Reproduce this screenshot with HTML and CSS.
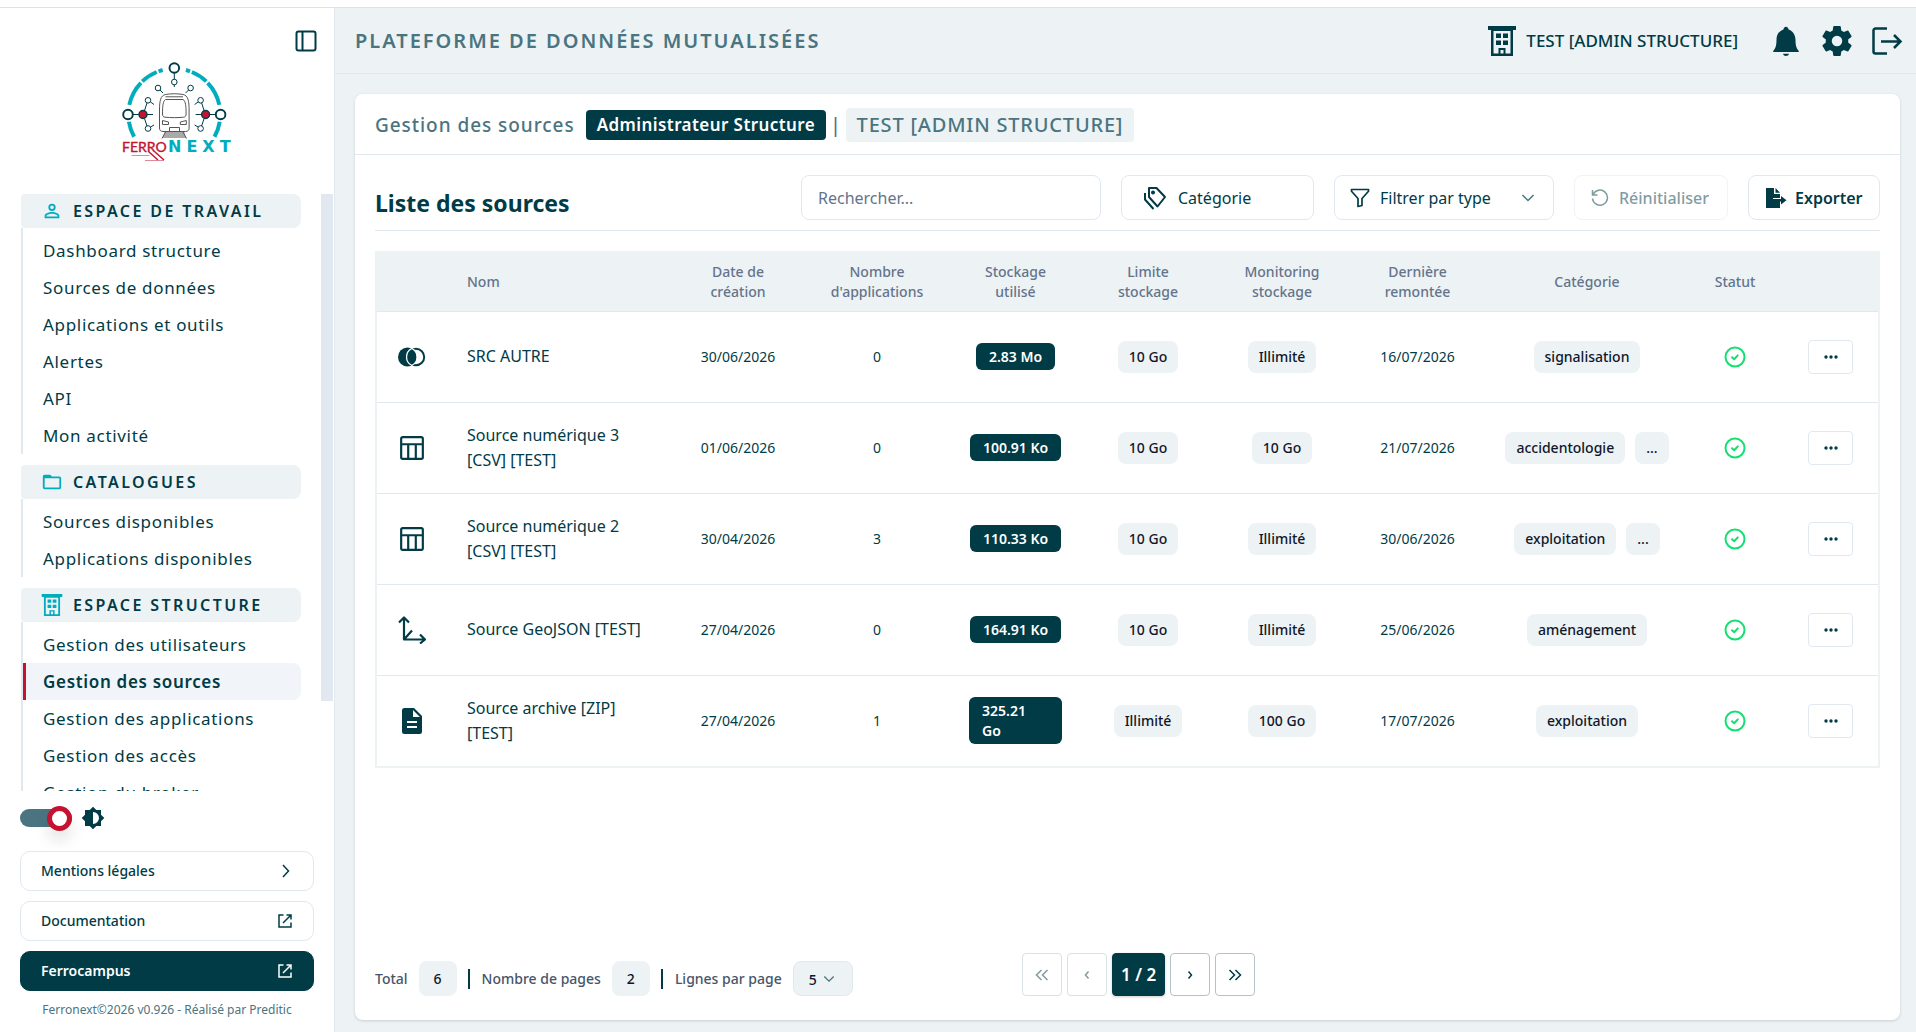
FILE: index.html
```html
<!DOCTYPE html>
<html lang="fr">
<head>
<meta charset="utf-8">
<meta name="viewport" content="width=device-width, initial-scale=1">
<title>Gestion des sources</title>
<link rel="stylesheet" href="styles.css">
</head>
<body>
<svg class="sprite" aria-hidden="true">
  <symbol id="i-building" viewBox="0 0 28 30"><path fill="currentColor" fill-rule="evenodd" d="M0 0h28v4h-3v26H3V4H0zM5.500 5v22.500h5V22h7v5.500h5V5zM8 7.500h5v4.500H8zM15 7.500h5v4.500h-5zM8 14.500h5v4.500H8zM15 14.500h5v4.500h-5zM12.500 24v3.500h3V24z"/></symbol>
  <symbol id="i-table" viewBox="0 0 24 24"><g fill="none" stroke="currentColor" stroke-width="2"><rect x="2" y="2" width="20" height="20" rx="1.500"/><path d="M2 8.500h20M8.500 8.500V22M15.500 8.500V22"/></g></symbol>
  <symbol id="i-ok" viewBox="0 0 22 22"><g fill="none" stroke="currentColor" stroke-width="2" stroke-linecap="round" stroke-linejoin="round"><circle cx="11" cy="11" r="9.500"/><path d="M8 11.200l2.200 2 3.600-3.800"/></g></symbol>
  <symbol id="i-dots" viewBox="0 0 14 4"><g fill="currentColor"><circle cx="2" cy="2" r="1.700"/><circle cx="7" cy="2" r="1.700"/><circle cx="12" cy="2" r="1.700"/></g></symbol>
  <symbol id="i-down" viewBox="0 0 14 8"><path fill="none" stroke="currentColor" stroke-width="1.500" d="M1.500 1L7 6.500 12.500 1"/></symbol>
  <symbol id="i-open" viewBox="0 0 14 14"><path fill="none" stroke="currentColor" stroke-width="1.500" d="M5.500 1H1v12h12V8.500M8.500 1H13v4.500M13 1L5 9"/></symbol>
</svg>

<div class="app">
  <aside class="sidebar">
    <div class="sidebar-top">
      <button class="icon-btn" type="button" aria-label="Replier le menu">
        <svg width="22" height="22" viewBox="0 0 22 22" fill="none" stroke="currentColor" stroke-width="2"><rect x="1.500" y="1.500" width="19" height="19" rx="2"/><path d="M7.500 2v18"/></svg>
      </button>
    </div>
    <svg class="logo" width="144" height="104" viewBox="-21 0 144 104" role="img" aria-label="Ferronext">
      <defs>
        <g id="logo-half" fill="none">
          <g stroke="#00adbf" stroke-width="4">
            <path d="M42.600 11.300A46 46 0 0 1 46.700 10"/>
            <path d="M26.300 21.400A46 46 0 0 1 40.700 12"/>
            <path d="M13.300 44.900A46 46 0 0 1 24.900 22.800"/>
            <path d="M12.900 61.700A46 46 0 0 0 18.100 76.800"/>
          </g>
          <g stroke="#003b46" stroke-width="1">
            <path d="M17 54.500h20M28.500 50.500L31 43M28.500 58.500L31 66M34.500 42l3.500 2.500M34.500 67l3.500-2M44 30l3 3"/>
            <g fill="#fff"><circle cx="42" cy="28" r="2.800"/><circle cx="32" cy="40.300" r="2.800"/><circle cx="32" cy="68.500" r="2.800"/></g>
            <circle cx="27" cy="54.500" r="4" fill="#c41230" stroke-width="1.400"/>
            <circle cx="12" cy="54.500" r="4.800" fill="#fff" stroke-width="1.900"/>
          </g>
        </g>
      </defs>
      <use href="#logo-half"/>
      <use href="#logo-half" transform="matrix(-1 0 0 1 116.600 0)"/>
      <g fill="#fff" stroke="#003b46">
        <path d="M58.300 13v14"/>
        <circle cx="58.300" cy="8" r="4.800" stroke-width="1.900"/><circle cx="58.300" cy="22" r="2.800"/>
      </g>
      <g fill="#fff" stroke="#555" stroke-width="1">
        <path d="M43.500 68V50c0-9 1-14.500 6-15.500 5-1 12.600-1 17.600 0 5 1 6 6.500 6 15.500v18c0 2-1 3.500-3.500 3.500H47c-2.500 0-3.500-1.500-3.500-3.500z"/>
        <path d="M46.500 54c0-8 .5-13 3-14.500h17.600c2.500 1.500 3 6.500 3 14.500 0 2-.8 3-2.500 3.200-6 .6-12.600.6-18.600 0-1.700-.2-2.500-1.200-2.500-3.200zM49.500 36.800h17.500M46.500 60.500l6 1.500v2.500h-6zM70.300 60.500l-6 1.500v2.500h6zM53.500 71v-3.500h10V71"/>
        <path d="M48.500 73h20M48 75h21M49.500 72l-3.500 6.500M67 72l3.500 6.500M47 77h23"/>
      </g>
      <text x="6" y="92" class="logo-ferro">FERRO</text>
      <text x="52" y="92" class="logo-next">NEXT</text>
      <g stroke="#c41230"><path stroke-width="1.500" d="M33 92l9 8M39 92l9 8"/><path stroke-width=".5" d="M15.500 95.500h18M29 100.500h19"/></g>
    </svg>

    <div class="nav-wrap">
      <nav class="nav">
        <section>
          <h2><svg width="22" height="22" viewBox="0 0 24 24" fill="currentColor"><path d="M12,4A4,4 0 0,1 16,8A4,4 0 0,1 12,12A4,4 0 0,1 8,8A4,4 0 0,1 12,4M12,6A2,2 0 0,0 10,8A2,2 0 0,0 12,10A2,2 0 0,0 14,8A2,2 0 0,0 12,6M12,13C14.670,13 20,14.330 20,17V20H4V17C4,14.330 9.330,13 12,13M12,14.900C9.030,14.900 5.900,16.360 5.900,17V18.100H18.100V17C18.100,16.360 14.970,14.900 12,14.900Z"/></svg>ESPACE DE TRAVAIL</h2>
          <ul>
            <li><a href="#">Dashboard structure</a></li>
            <li><a href="#">Sources de données</a></li>
            <li><a href="#">Applications et outils</a></li>
            <li><a href="#">Alertes</a></li>
            <li><a href="#">API</a></li>
            <li><a href="#">Mon activité</a></li>
          </ul>
        </section>
        <section>
          <h2><svg width="22" height="22" viewBox="0 0 24 24" fill="currentColor"><path d="M20,18H4V8H20M20,6H12L10,4H4C2.890,4 2,4.890 2,6V18A2,2 0 0,0 4,20H20A2,2 0 0,0 22,18V8C22,6.890 21.100,6 20,6Z"/></svg>CATALOGUES</h2>
          <ul>
            <li><a href="#">Sources disponibles</a></li>
            <li><a href="#">Applications disponibles</a></li>
          </ul>
        </section>
        <section>
          <h2><svg width="22" height="22"><use href="#i-building"/></svg>ESPACE STRUCTURE</h2>
          <ul>
            <li><a href="#">Gestion des utilisateurs</a></li>
            <li><a href="#" class="active" aria-current="page">Gestion des sources</a></li>
            <li><a href="#">Gestion des applications</a></li>
            <li><a href="#">Gestion des accès</a></li>
            <li><a href="#">Gestion du broker</a></li>
          </ul>
        </section>
      </nav>
      <div class="nav-track"><div class="nav-thumb"></div></div>
    </div>

    <div class="sidebar-bottom">
      <label class="theme">
        <input type="checkbox" class="switch" checked aria-label="Thème clair">
        <svg width="24" height="24" viewBox="0 0 24 24" fill="currentColor"><path d="M12,18V6A6,6 0 0,1 18,12A6,6 0 0,1 12,18M20,15.310L23.310,12L20,8.690V4H15.310L12,0.690L8.690,4H4V8.690L0.690,12L4,15.310V20H8.690L12,23.310L15.310,20H20V15.310Z"/></svg>
      </label>
      <a class="side-link" href="#">Mentions légales<svg width="14" height="14" viewBox="0 0 14 14"><path fill="none" stroke="currentColor" stroke-width="1.500" d="M5 1l5.500 6L5 13"/></svg></a>
      <a class="side-link" href="#">Documentation<svg width="14" height="14"><use href="#i-open"/></svg></a>
      <a class="side-link dark" href="#">Ferrocampus<svg width="14" height="14"><use href="#i-open"/></svg></a>
      <p class="version">Ferronext©2026 v0.926 - Réalisé par Preditic</p>
    </div>
  </aside>

  <div class="page">
    <header class="topbar">
      <h1>PLATEFORME DE DONNÉES MUTUALISÉES</h1>
      <div class="org"><svg width="28" height="30"><use href="#i-building"/></svg>TEST [ADMIN STRUCTURE]</div>
      <div class="actions">
        <button class="icon-btn" type="button" aria-label="Notifications"><svg width="34" height="34" viewBox="0 0 24 24" fill="currentColor"><path d="M21 19v.800H3V19c1.300-1.500 2.300-3 2.300-8 0-3.500 2-6.300 4.900-7.200C10.400 2.700 11.100 2 12 2s1.600.700 1.800 1.800c2.900.9 4.900 3.700 4.900 7.200 0 5 1 6.500 2.300 8M14.200 21a2.300 2.300 0 0 1-4.400 0"/></svg></button>
        <button class="icon-btn" type="button" aria-label="Paramètres"><svg width="36" height="36" viewBox="0 0 24 24" fill="currentColor"><path d="M12,15.500A3.500,3.500 0 0,1 8.500,12A3.500,3.500 0 0,1 12,8.500A3.500,3.500 0 0,1 15.500,12A3.500,3.500 0 0,1 12,15.500M19.430,12.970C19.470,12.650 19.500,12.330 19.500,12C19.500,11.670 19.470,11.340 19.430,11L21.540,9.370C21.730,9.220 21.780,8.950 21.660,8.730L19.660,5.270C19.540,5.050 19.270,4.960 19.050,5.050L16.560,6.050C16.040,5.660 15.500,5.320 14.870,5.070L14.500,2.420C14.460,2.180 14.250,2 14,2H10C9.750,2 9.540,2.180 9.500,2.420L9.130,5.070C8.500,5.320 7.960,5.660 7.440,6.050L4.950,5.050C4.730,4.960 4.460,5.050 4.340,5.270L2.340,8.730C2.210,8.950 2.270,9.220 2.460,9.370L4.570,11C4.530,11.340 4.500,11.670 4.500,12C4.500,12.330 4.530,12.650 4.570,12.970L2.460,14.630C2.270,14.780 2.210,15.050 2.340,15.270L4.340,18.730C4.460,18.950 4.730,19.030 4.950,18.950L7.440,17.940C7.960,18.340 8.500,18.680 9.130,18.930L9.500,21.580C9.540,21.820 9.750,22 10,22H14C14.250,22 14.460,21.820 14.500,21.580L14.870,18.930C15.500,18.670 16.040,18.340 16.560,17.940L19.050,18.950C19.270,19.030 19.540,18.950 19.660,18.730L21.660,15.270C21.780,15.050 21.730,14.780 21.540,14.630L19.430,12.970Z"/></svg></button>
        <button class="icon-btn" type="button" aria-label="Se déconnecter"><svg width="32" height="30" viewBox="0 0 32 30" fill="none" stroke="currentColor" stroke-width="2.500"><path d="M16 2.500H4.500a2 2 0 0 0-2 2v21a2 2 0 0 0 2 2H16M10 15.500h19M23 9l6.500 6.500L23 22"/></svg></button>
      </div>
    </header>

    <main class="card">
      <div class="crumbs">
        <span>Gestion des sources</span>
        <strong class="role">Administrateur Structure</strong>
        <span class="bar">|</span>
        <span class="scope">TEST [ADMIN STRUCTURE]</span>
      </div>

      <div class="content">
        <div class="toolbar">
          <h2>Liste des sources</h2>
          <input class="field search" type="search" placeholder="Rechercher..." aria-label="Rechercher">
          <button class="field category" type="button"><svg width="26" height="26" viewBox="0 0 26 26" fill="none" stroke="currentColor" stroke-width="2" stroke-linejoin="round"><path d="M7 3h7.500l8.500 9-7.500 9.500L7 12z"/><path d="M3 8v6.500l8.500 9.500"/><circle cx="11" cy="7.500" r="1" fill="currentColor"/></svg>Catégorie</button>
          <div class="select-box type">
            <svg class="lead" width="20" height="20" viewBox="0 0 20 20" fill="none" stroke="currentColor" stroke-width="1.700" stroke-linejoin="round"><path d="M1.500 1.500h17v1.800L12 10.500v7L8 18.500v-8L1.500 3.300z"/></svg>
            <select class="field" aria-label="Filtrer par type"><option>Filtrer par type</option></select>
            <svg class="caret" width="14" height="8"><use href="#i-down"/></svg>
          </div>
          <button class="field reset" type="button" disabled><svg width="18" height="18" viewBox="0 0 18 18" fill="none" stroke="currentColor" stroke-width="1.500"><path d="M1.500 1v5h5M2 5.800A7.500 7.500 0 1 1 1.500 9.500"/></svg>Réinitialiser</button>
          <button class="field export" type="button"><svg width="22" height="20" viewBox="0 0 22 20" fill="currentColor"><path d="M1 0h8v6h6v4H8v3.500h7V20H1zM10.500 0L15 4.700h-4.500zM8 11h8V8l5.500 4.300L16 16.500v-3H8z"/></svg>Exporter</button>
        </div>

        <div class="table-wrap">
          <table>
            <colgroup><col class="c-icon"><col class="c-name"><col class="c-date"><col class="c-apps"><col class="c-used"><col class="c-limit"><col class="c-mon"><col class="c-last"><col class="c-cat"><col class="c-stat"><col class="c-act"></colgroup>
            <thead>
              <tr><th></th><th class="name">Nom</th><th>Date de<br>création</th><th>Nombre<br>d'applications</th><th>Stockage<br>utilisé</th><th>Limite<br>stockage</th><th>Monitoring<br>stockage</th><th>Dernière<br>remontée</th><th>Catégorie</th><th>Statut</th><th></th></tr>
            </thead>
            <tbody>
              <tr>
                <td class="kind"><svg width="28" height="20" viewBox="0 0 28 20"><circle cx="18" cy="10" r="8.200" fill="none" stroke="currentColor" stroke-width="2"/><circle cx="9.500" cy="10" r="9.500" fill="currentColor"/><path fill="none" stroke="#fff" stroke-width="1.300" d="M13.800 1.500a9.500 9.500 0 0 0 0 17a9.500 9.500 0 0 0 0-17"/></svg></td>
                <td class="name">SRC AUTRE</td><td>30/06/2026</td><td>0</td><td class="used"><span class="used-tag">2.83 Mo</span></td><td><span class="tag">10 Go</span></td><td><span class="tag">Illimité</span></td><td>16/07/2026</td>
                <td><span class="tag">signalisation</span></td><td class="ok"><svg width="22" height="22"><use href="#i-ok"/></svg></td><td class="act"><button class="more" type="button" aria-label="Actions"><svg width="14" height="4"><use href="#i-dots"/></svg></button></td>
              </tr>
              <tr>
                <td class="kind"><svg width="26" height="26"><use href="#i-table"/></svg></td>
                <td class="name">Source numérique 3 [CSV] [TEST]</td><td>01/06/2026</td><td>0</td><td class="used"><span class="used-tag">100.91 Ko</span></td><td><span class="tag">10 Go</span></td><td><span class="tag">10 Go</span></td><td>21/07/2026</td>
                <td><span class="tags"><span class="tag">accidentologie</span><span class="tag">...</span></span></td><td class="ok"><svg width="22" height="22"><use href="#i-ok"/></svg></td><td class="act"><button class="more" type="button" aria-label="Actions"><svg width="14" height="4"><use href="#i-dots"/></svg></button></td>
              </tr>
              <tr>
                <td class="kind"><svg width="26" height="26"><use href="#i-table"/></svg></td>
                <td class="name">Source numérique 2 [CSV] [TEST]</td><td>30/04/2026</td><td>3</td><td class="used"><span class="used-tag">110.33 Ko</span></td><td><span class="tag">10 Go</span></td><td><span class="tag">Illimité</span></td><td>30/06/2026</td>
                <td><span class="tags"><span class="tag">exploitation</span><span class="tag">...</span></span></td><td class="ok"><svg width="22" height="22"><use href="#i-ok"/></svg></td><td class="act"><button class="more" type="button" aria-label="Actions"><svg width="14" height="4"><use href="#i-dots"/></svg></button></td>
              </tr>
              <tr>
                <td class="kind"><svg width="28" height="28" viewBox="0 0 28 28" fill="none" stroke="currentColor" stroke-width="2.200" stroke-linejoin="round"><path d="M6 2v21.500h20M1 6.500L6 1.500l5 5M22 18.500l5 5-5 4M6 23.500l8-9"/></svg></td>
                <td class="name">Source GeoJSON [TEST]</td><td>27/04/2026</td><td>0</td><td class="used"><span class="used-tag">164.91 Ko</span></td><td><span class="tag">10 Go</span></td><td><span class="tag">Illimité</span></td><td>25/06/2026</td>
                <td><span class="tag">aménagement</span></td><td class="ok"><svg width="22" height="22"><use href="#i-ok"/></svg></td><td class="act"><button class="more" type="button" aria-label="Actions"><svg width="14" height="4"><use href="#i-dots"/></svg></button></td>
              </tr>
              <tr>
                <td class="kind"><svg width="22" height="26" viewBox="0 0 22 26"><path fill="currentColor" fill-rule="evenodd" d="M3.500 0H13l8 8v15.500a2.500 2.500 0 0 1-2.500 2.500h-15A2.500 2.500 0 0 1 1 23.500v-21A2.500 2.500 0 0 1 3.500 0zM12 2v7h7zM6 13v2h10v-2zM6 18v2h10v-2z"/></svg></td>
                <td class="name">Source archive [ZIP] [TEST]</td><td>27/04/2026</td><td>1</td><td class="used"><span class="used-tag two-lines">325.21<br>Go</span></td><td><span class="tag">Illimité</span></td><td><span class="tag">100 Go</span></td><td>17/07/2026</td>
                <td><span class="tag">exploitation</span></td><td class="ok"><svg width="22" height="22"><use href="#i-ok"/></svg></td><td class="act"><button class="more" type="button" aria-label="Actions"><svg width="14" height="4"><use href="#i-dots"/></svg></button></td>
              </tr>
            </tbody>
          </table>
        </div>
      </div>

      <footer class="pager">
        <div class="summary">
          <span>Total</span><span class="count">6</span><i></i>
          <span>Nombre de pages</span><span class="count">2</span><i></i>
          <label for="rows">Lignes par page</label>
          <div class="select-box rows">
            <select id="rows"><option>5</option></select>
            <svg class="caret" width="12" height="8" viewBox="0 0 14 8"><use href="#i-down"/></svg>
          </div>
        </div>
        <div class="pages">
          <button type="button" disabled aria-label="Première page"><svg width="14" height="12" viewBox="0 0 14 12"><path d="M6.500 1l-5 5 5 5M12.500 1l-5 5 5 5"/></svg></button>
          <button type="button" disabled aria-label="Page précédente"><svg width="14" height="12" viewBox="0 0 14 12"><path d="M8.500 2.500L5.500 6l3 3.500"/></svg></button>
          <button type="button" class="current">1 / 2</button>
          <button type="button" aria-label="Page suivante"><svg width="14" height="12" viewBox="0 0 14 12"><path d="M5.500 2.500l3 3.500-3 3.500"/></svg></button>
          <button type="button" aria-label="Dernière page"><svg width="14" height="12" viewBox="0 0 14 12"><path d="M1.500 1l5 5-5 5M7.500 1l5 5-5 5"/></svg></button>
        </div>
      </footer>
    </main>
  </div>
</div>
</body>
</html>
```
FILE: styles.css
```css
:root {
  --ink: #003b46;
  --muted: #4a7580;
  --soft: #edf2f5;
  --line: #e2e8f0;
  --slate: #64748b;
  --red: #c41230;
  --cyan: #00adbf;
}

* { box-sizing: border-box; }

body {
  margin: 0;
  background: #fff;
  color: var(--ink);
  font: 400 14px/20px "Noto Sans", "Open Sans", sans-serif;
}

h1, h2, p, ul { margin: 0; padding: 0; }
ul { list-style: none; }
a { color: inherit; text-decoration: none; }
button, input, select { font: inherit; color: inherit; }
svg { display: block; flex: none; }
.sprite { position: absolute; width: 0; height: 0; }

.app {
  display: grid;
  grid-template-columns: 335px minmax(0, 1fr);
  height: calc(100vh - 7px);
  margin-top: 7px;
  border-top: 1px solid #dee2e6;
}

.icon-btn {
  display: grid;
  place-items: center;
  padding: 0;
  border: 0;
  background: none;
}

/* Sidebar */
.sidebar {
  display: flex;
  flex-direction: column;
  min-height: 0;
  border-right: 1px solid var(--line);
}
.sidebar-top {
  display: flex;
  justify-content: flex-end;
  padding: 22px 17px 8px;
}
.logo { align-self: center; margin-bottom: 30px; }
.logo-ferro { font: 400 14px Lato, sans-serif; fill: var(--red); stroke: var(--red); stroke-width: .4; }
.logo-next { font: 700 16px "DejaVu Sans", sans-serif; letter-spacing: 5px; fill: var(--cyan); }

.nav-wrap {
  display: flex;
  flex: 1;
  min-height: 0;
  justify-content: space-between;
  padding: 0 1px 0 21px;
}
.nav {
  display: flex;
  flex-direction: column;
  gap: 11px;
  width: 280px;
  overflow: hidden;
}
.nav section { flex: none; }
.nav-track { width: 12px; }
.nav-thumb { height: 85%; background: var(--line); }

.nav h2 {
  display: flex;
  align-items: center;
  gap: 10px;
  height: 34px;
  padding-left: 20px;
  border-radius: 4px 8px 8px 4px;
  background: var(--soft);
  font-size: 16px;
  font-weight: 600;
  letter-spacing: .15em;
}
.nav h2 svg { color: var(--cyan); }
.nav ul { padding-top: 4px; border-left: 2px solid var(--line); }
.nav a {
  display: block;
  padding-left: 20px;
  border-radius: 0 8px 8px 0;
  font-size: 17px;
  line-height: 37px;
  letter-spacing: .04em;
}
.nav a.active {
  padding-left: 17px;
  border-left: 3px solid var(--red);
  background: #f1f5f9;
  font-weight: 600;
}

.sidebar-bottom {
  display: flex;
  flex-direction: column;
  gap: 10px;
  padding: 14px 20px 13px;
}
.theme {
  display: flex;
  align-items: center;
  gap: 9px;
  margin-bottom: 10px;
}
.switch {
  display: flex;
  align-items: center;
  justify-content: flex-end;
  width: 52px;
  height: 18px;
  margin: 4px 0;
  border-radius: 9px;
  background: var(--muted);
  appearance: none;
}
.switch::before {
  content: "";
  box-sizing: border-box;
  flex: none;
  width: 25px;
  height: 25px;
  border: 5px solid var(--red);
  border-radius: 50%;
  background: #fff;
  box-shadow: 0 10px 15px rgba(0, 0, 0, .1);
}
.side-link {
  display: flex;
  align-items: center;
  justify-content: space-between;
  height: 40px;
  padding: 0 21px 0 20px;
  border: 1px solid var(--line);
  border-radius: 10px;
  font-weight: 500;
}
.side-link.dark {
  border-color: var(--ink);
  background: var(--ink);
  color: #fff;
  font-weight: 600;
}
.version {
  color: var(--muted);
  font-size: 12px;
  line-height: 18px;
  text-align: center;
}

/* Page */
.page {
  display: flex;
  flex-direction: column;
  min-width: 0;
  min-height: 0;
  background: var(--soft);
}
.topbar {
  display: flex;
  align-items: center;
  height: 66px;
  flex: none;
  padding: 0 13px 0 20px;
  border-bottom: 1px solid var(--line);
}
.topbar h1 {
  flex: 1;
  color: var(--muted);
  font-size: 20px;
  font-weight: 600;
  letter-spacing: .1em;
}
.org {
  display: flex;
  align-items: center;
  gap: 10px;
  font-size: 17px;
  font-weight: 500;
}
.actions {
  display: flex;
  align-items: center;
  gap: 16px;
  margin-left: 31px;
}

.card {
  display: flex;
  flex: 1;
  flex-direction: column;
  min-height: 0;
  margin: 20px 16px 12px 20px;
  border-radius: 8px;
  background: #fff;
  box-shadow: 0 1px 3px rgba(0, 0, 0, .15);
}
.crumbs {
  display: flex;
  align-items: center;
  height: 61px;
  flex: none;
  padding: 2px 20px 0;
  border-bottom: 1px solid var(--line);
  color: var(--muted);
  font-size: 19px;
  font-weight: 500;
  letter-spacing: .05em;
}
.role {
  margin-left: 11px;
  padding: 0 11px;
  border-radius: 4px;
  background: var(--ink);
  color: #fff;
  font-size: 17px;
  font-weight: 600;
  line-height: 30px;
  letter-spacing: .025em;
}
.bar { margin: 0 4px; }
.scope {
  padding: 0 11px;
  border-radius: 4px;
  background: var(--soft);
  font-size: 20px;
  line-height: 34px;
  letter-spacing: .04em;
}

.content { flex: 1; min-height: 0; padding: 20px; }
.toolbar {
  display: flex;
  align-items: center;
  gap: 20px;
  padding-bottom: 10px;
  border-bottom: 1px solid var(--line);
}
.toolbar h2 {
  flex: 1;
  padding-top: 10px;
  font-size: 23px;
  font-weight: 700;
  line-height: 32px;
}
.field {
  display: flex;
  align-items: center;
  gap: 10px;
  height: 45px;
  padding: 0 16px;
  border: 1px solid var(--line);
  border-radius: 8px;
  background: #fff;
  font-size: 16px;
}
.search { width: 300px; appearance: none; }
.search::placeholder { color: var(--slate); opacity: 1; }
.category { width: 193px; padding-left: 20px; }
.reset { width: 154px; font-weight: 500; opacity: .5; color: inherit; }
.export { width: 132px; font-weight: 600; gap: 8px; }
.select-box { position: relative; }
.select-box select { width: 100%; appearance: none; }
.select-box svg { position: absolute; top: 50%; translate: 0 -50%; pointer-events: none; }
.select-box .caret { color: var(--muted); }
.type { width: 220px; }
.type select { padding-left: 45px; }
.type .lead { left: 16px; }
.type .caret { right: 19px; }

/* Sources table */
.table-wrap { margin-top: 20px; border: 2px solid var(--soft); }
table { width: 100%; border-collapse: collapse; table-layout: fixed; }
.c-icon { width: 74px; }
.c-name { width: 218px; }
.c-date { width: 138px; }
.c-apps { width: 140px; }
.c-used { width: 137px; }
.c-limit { width: 128px; }
.c-mon { width: 140px; }
.c-last { width: 131px; }
.c-cat { width: 208px; }
.c-stat { width: 88px; }
.c-act { width: 99px; }
th, td { padding: 0; text-align: center; vertical-align: middle; }
th {
  height: 58px;
  background: var(--soft);
  color: var(--slate);
  font-weight: 500;
}
td { height: 91px; border-top: 1px solid var(--line); }
td svg { margin: 0 auto; }
td.kind { padding-right: 4px; }
td.act { padding-left: 4px; }
th.name, td.name { padding-left: 16px; text-align: left; }
td.name { padding-right: 12px; font-size: 16px; line-height: 25px; }
td.used { padding: 0 22px; }
.used-tag {
  display: inline-block;
  padding: 4px 13px 3px;
  border-radius: 6px;
  background: var(--ink);
  color: #fff;
  font-weight: 600;
  text-align: left;
  white-space: nowrap;
}
.used-tag.two-lines { display: block; }
.tag {
  display: inline-block;
  padding: 6px 11px;
  border-radius: 8px;
  background: var(--soft);
  color: #0f172a;
  font-weight: 500;
}
.tags { display: inline-flex; gap: 10px; }
.ok { color: #12e071; }
.more {
  display: inline-grid;
  place-items: center;
  width: 45px;
  height: 34px;
  padding: 0;
  border: 1px solid var(--line);
  border-radius: 4px;
  background: #fff;
  vertical-align: middle;
}

/* Pager */
.pager {
  display: grid;
  grid-template-columns: 43% auto;
  align-items: end;
  padding: 0 20px 24px;
}
.summary { display: flex; align-items: center; gap: 11px; color: #475569; font-weight: 500; }
.summary i { width: 2px; height: 20px; margin-right: 1px; background: var(--ink); }
.count, .rows select {
  border-radius: 8px;
  background: var(--soft);
  color: #0f172a;
  line-height: 35px;
}
.count { padding: 0 15px; }
.rows { width: 60px; }
.rows select { height: 35px; padding: 0 15px; border: 1px solid var(--line); }
.rows .caret { right: 18px; }
.pages { display: flex; gap: 5px; }
.pages button {
  display: grid;
  place-items: center;
  width: 40px;
  height: 43px;
  padding: 0;
  border: 1px solid #b3c4c8;
  border-radius: 4px;
  background: #fff;
}
.pages button:disabled { opacity: .5; color: var(--ink); }
.pages .current {
  width: 53px;
  border-color: var(--ink);
  background: var(--ink);
  color: #fff;
  font-size: 17px;
  font-weight: 600;
  box-shadow: 0 1px 3px rgba(0, 0, 0, .2);
}
.pages path { fill: none; stroke: currentColor; stroke-width: 1.5; }
```
